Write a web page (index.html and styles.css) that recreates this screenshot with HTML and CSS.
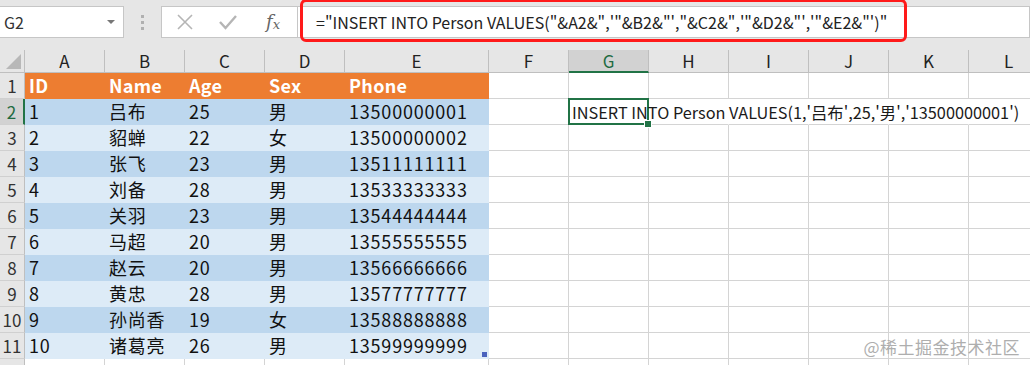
FILE: index.html
```html
<!DOCTYPE html>
<html lang="zh">
<head>
<meta charset="utf-8">
<title>Excel</title>
<link rel="stylesheet" href="styles.css">
</head>
<body>
<div class="app">
  <div class="fbar">
    <div class="namebox"><span class="ref">G2</span><span class="caret"></span></div>
    <div class="grip"><i></i><i></i><i></i></div>
    <div class="btns">
      <svg class="ico" width="18" height="18" viewBox="0 0 18 18"><path d="M2 2 L16 16 M16 2 L2 16" stroke="#b5b5b5" stroke-width="1.6" fill="none"/></svg>
      <svg class="ico" width="20" height="18" viewBox="0 0 20 18"><path d="M2 9 L7.5 15 L18 3" stroke="#b5b5b5" stroke-width="2.4" fill="none"/></svg>
      <span class="fx">f<sub>x</sub></span>
    </div>
    <div class="formula"><span class="ftext">="INSERT INTO Person VALUES("&amp;A2&amp;",'"&amp;B2&amp;"',"&amp;C2&amp;",'"&amp;D2&amp;"','"&amp;E2&amp;"')"</span></div>
  </div>
  <div class="sheet">
    <div class="corner"><span class="tri"></span></div>
    <div class="ch">A</div><div class="ch">B</div><div class="ch">C</div><div class="ch">D</div><div class="ch">E</div><div class="ch">F</div><div class="ch sel">G</div><div class="ch">H</div><div class="ch">I</div><div class="ch">J</div><div class="ch">K</div><div class="ch">L</div>

    <div class="rh">1</div>
    <div class="c th">ID</div><div class="c th">Name</div><div class="c th">Age</div><div class="c th">Sex</div><div class="c th">Phone</div>
    <div class="c"></div><div class="c"></div><div class="c"></div><div class="c"></div><div class="c"></div><div class="c"></div><div class="c"></div>

    <div class="rh sel">2</div>
    <div class="c td">1</div><div class="c td">吕布</div><div class="c td">25</div><div class="c td">男</div><div class="c td">13500000001</div>
    <div class="c"></div><div class="c active"><span class="out">INSERT INTO Person VALUES(1,'吕布',25,'男','13500000001')</span></div><div class="c nr"></div><div class="c nr"></div><div class="c nr"></div><div class="c nr"></div><div class="c nr"></div>

    <div class="rh">3</div>
    <div class="c tl">2</div><div class="c tl">貂蝉</div><div class="c tl">22</div><div class="c tl">女</div><div class="c tl">13500000002</div>
    <div class="c"></div><div class="c"></div><div class="c"></div><div class="c"></div><div class="c"></div><div class="c"></div><div class="c"></div>

    <div class="rh">4</div>
    <div class="c td">3</div><div class="c td">张飞</div><div class="c td">23</div><div class="c td">男</div><div class="c td">13511111111</div>
    <div class="c"></div><div class="c"></div><div class="c"></div><div class="c"></div><div class="c"></div><div class="c"></div><div class="c"></div>

    <div class="rh">5</div>
    <div class="c tl">4</div><div class="c tl">刘备</div><div class="c tl">28</div><div class="c tl">男</div><div class="c tl">13533333333</div>
    <div class="c"></div><div class="c"></div><div class="c"></div><div class="c"></div><div class="c"></div><div class="c"></div><div class="c"></div>

    <div class="rh">6</div>
    <div class="c td">5</div><div class="c td">关羽</div><div class="c td">23</div><div class="c td">男</div><div class="c td">13544444444</div>
    <div class="c"></div><div class="c"></div><div class="c"></div><div class="c"></div><div class="c"></div><div class="c"></div><div class="c"></div>

    <div class="rh">7</div>
    <div class="c tl">6</div><div class="c tl">马超</div><div class="c tl">20</div><div class="c tl">男</div><div class="c tl">13555555555</div>
    <div class="c"></div><div class="c"></div><div class="c"></div><div class="c"></div><div class="c"></div><div class="c"></div><div class="c"></div>

    <div class="rh">8</div>
    <div class="c td">7</div><div class="c td">赵云</div><div class="c td">20</div><div class="c td">男</div><div class="c td">13566666666</div>
    <div class="c"></div><div class="c"></div><div class="c"></div><div class="c"></div><div class="c"></div><div class="c"></div><div class="c"></div>

    <div class="rh">9</div>
    <div class="c tl">8</div><div class="c tl">黄忠</div><div class="c tl">28</div><div class="c tl">男</div><div class="c tl">13577777777</div>
    <div class="c"></div><div class="c"></div><div class="c"></div><div class="c"></div><div class="c"></div><div class="c"></div><div class="c"></div>

    <div class="rh">10</div>
    <div class="c td">9</div><div class="c td">孙尚香</div><div class="c td">19</div><div class="c td">女</div><div class="c td">13588888888</div>
    <div class="c"></div><div class="c"></div><div class="c"></div><div class="c"></div><div class="c"></div><div class="c"></div><div class="c"></div>

    <div class="rh">11</div>
    <div class="c tl">10</div><div class="c tl">诸葛亮</div><div class="c tl">26</div><div class="c tl">男</div><div class="c tl last">13599999999<span class="handle"></span></div>
    <div class="c"></div><div class="c"></div><div class="c"></div><div class="c"></div><div class="c"></div><div class="c"></div><div class="c"></div>

    <div class="rh"></div>
    <div class="c"></div><div class="c"></div><div class="c"></div><div class="c"></div><div class="c"></div>
    <div class="c"></div><div class="c"></div><div class="c"></div><div class="c"></div><div class="c"></div><div class="c"></div><div class="c"></div>
  </div>
  <div class="watermark">@稀土掘金技术社区</div>
</div>
</body>
</html>
```
FILE: styles.css
```css
* { box-sizing: border-box; }
html, body { margin: 0; padding: 0; }
body {
  width: 1030px;
  height: 365px;
  overflow: hidden;
  background: #e6e6e6;
  font-family: "Noto Sans CJK SC", "Microsoft YaHei", sans-serif;
}
.app { position: relative; width: 1030px; height: 365px; overflow: hidden; }

/* formula bar */
.fbar {
  height: 50px;
  display: flex;
  align-items: flex-start;
  padding-top: 6px;
}
.namebox {
  width: 124px;
  height: 32px;
  background: #fff;
  border: 1px solid #c6c6c6;
  border-left: none;
  display: flex;
  align-items: center;
  justify-content: space-between;
  padding: 0 8px 0 4px;
}
.ref { font-size: 16px; color: #333; }
.caret {
  width: 0; height: 0;
  border-left: 4px solid transparent;
  border-right: 4px solid transparent;
  border-top: 4px solid #777;
}
.grip {
  width: 37px;
  height: 32px;
  display: flex;
  flex-direction: column;
  align-items: center;
  justify-content: center;
  gap: 3px;
}
.grip i { display: block; width: 3px; height: 3px; background: #b0b0b0; }
.btns {
  width: 137px;
  height: 32px;
  background: #fff;
  border: 1px solid #c6c6c6;
  display: flex;
  align-items: center;
  padding-left: 14px;
  gap: 24px;
}
.ico { display: block; }
.fx {
  font-family: "DejaVu Serif", "Liberation Serif", serif;
  font-style: italic;
  font-size: 18px;
  color: #666;
  line-height: 1;
  margin-left: 4px;
}
.fx sub { font-size: 13px; vertical-align: -1px; }
.formula {
  flex: 1;
  height: 32px;
  background: #fff;
  border: 1px solid #c6c6c6;
  border-left: none;
  display: flex;
  align-items: center;
  padding-left: 18px;
}
.ftext {
  position: relative;
  font-size: 16px;
  color: #222;
  white-space: nowrap;
}
.ftext::before {
  content: "";
  position: absolute;
  left: -16px;
  right: -20px;
  top: -11px;
  bottom: -8px;
  border: 3px solid #ff1a1a;
  border-radius: 6px;
}

/* sheet */
.sheet {
  display: grid;
  grid-template-columns: 25px 80px 80px 80px 80px 144px 80px 80px 80px 80px 80px 80px 80px;
  grid-template-rows: 23px repeat(12, 26px);
  width: 1049px;
  background: #fff;
}
.corner {
  background: #e6e6e6;
  border-right: 1px solid #bfbfbf;
  border-bottom: 1px solid #bfbfbf;
  position: relative;
}
.tri {
  position: absolute;
  right: 3px;
  bottom: 3px;
  width: 0; height: 0;
  border-left: 15px solid transparent;
  border-bottom: 15px solid #b8b8b8;
}
.ch {
  background: #e6e6e6;
  border-right: 1px solid #bfbfbf;
  border-bottom: 1px solid #bfbfbf;
  text-align: center;
  font-size: 17px;
  line-height: 22px;
  color: #222;
}
.ch.sel {
  background: #d2d2d2;
  color: #1e6b41;
  border-bottom: 2px solid #217346;
}
.rh {
  background: #e6e6e6;
  border-right: 1px solid #bfbfbf;
  border-bottom: 1px solid #d0d0d0;
  text-align: center;
  font-size: 17px;
  line-height: 25px;
  color: #333;
  overflow: hidden;
}
.rh.sel {
  background: #d2d2d2;
  color: #1e6b41;
  border-right: 2px solid #217346;
}
.c {
  border-right: 1px solid #d4d4d4;
  border-bottom: 1px solid #d4d4d4;
  font-size: 18px;
  line-height: 25px;
  padding-left: 4px;
  color: #111;
  white-space: nowrap;
  position: relative;
}
.c.nr { border-right-color: transparent; }
.th, .td, .tl { border-color: transparent; }
.td, .tl { letter-spacing: 0.8px; }
.th { background: #ed7d31; color: #fff; font-weight: 700; letter-spacing: 0.3px; }
.td { background: #bdd7ee; }
.tl { background: #ddebf7; }
.active { overflow: visible; z-index: 2; padding-left: 3px; }
.active::after {
  content: "";
  position: absolute;
  left: -1px;
  top: -1px;
  right: -1px;
  bottom: -1px;
  border: 2px solid #217346;
}
.active::before {
  content: "";
  position: absolute;
  right: -4px;
  bottom: -4px;
  width: 6px;
  height: 6px;
  background: #217346;
  border: 1px solid #fff;
  z-index: 3;
}
.out { font-size: 16.3px; color: #1a1a1a; position: relative; z-index: 2; }
.handle {
  position: absolute;
  right: 1px;
  bottom: 1px;
  width: 5px;
  height: 5px;
  background: #4a62bd;
}
.watermark {
  position: absolute;
  right: 10px;
  bottom: 6px;
  font-size: 17px;
  color: #aeaeae;
  letter-spacing: 0.5px;
}
```
